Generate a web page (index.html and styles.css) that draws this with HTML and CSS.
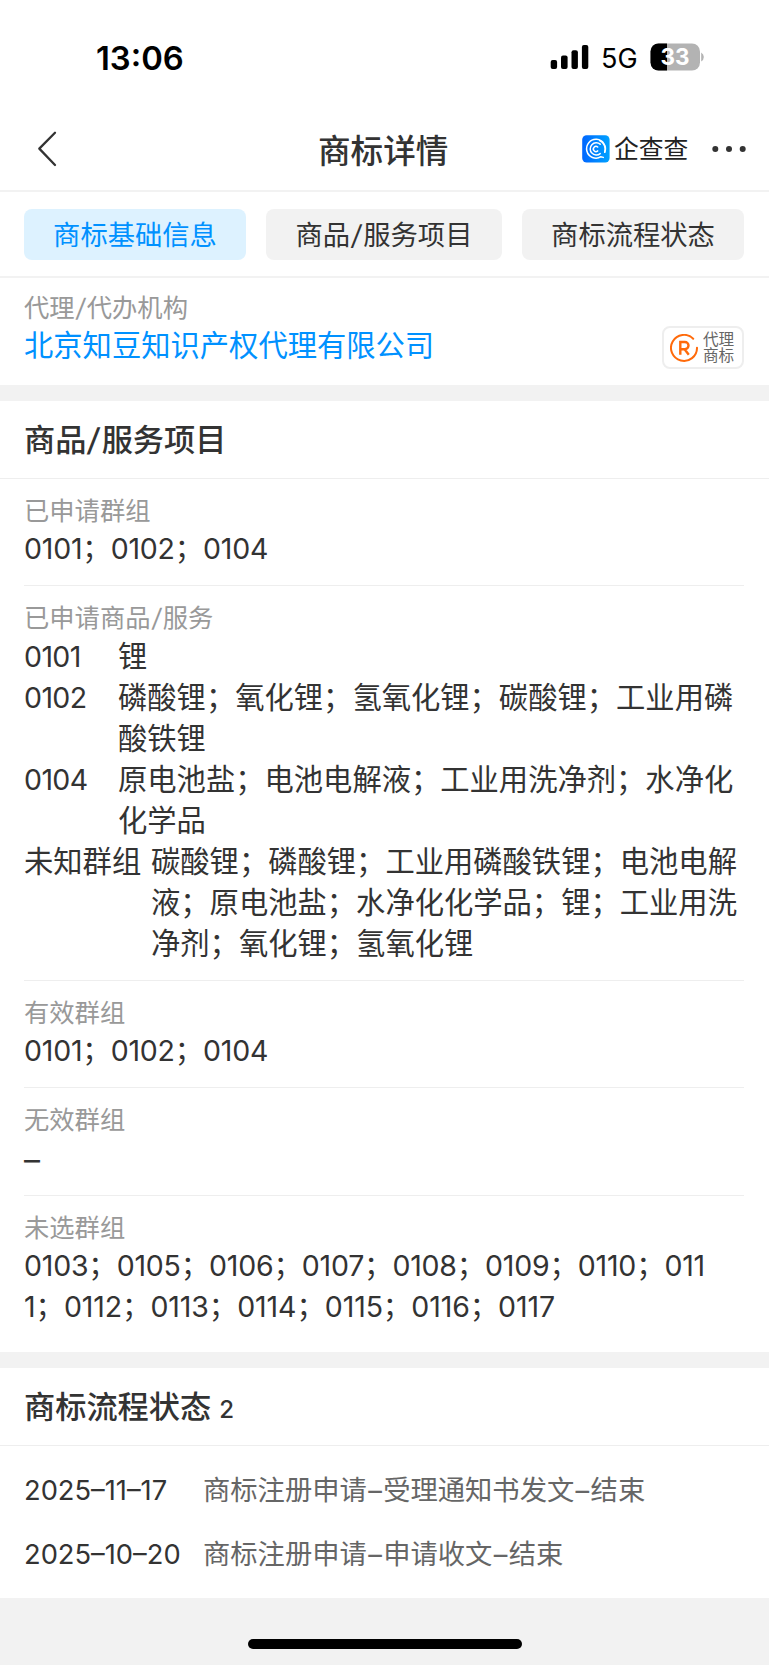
FILE: index.html
```html
<!DOCTYPE html>
<html lang="zh-CN">
<head>
<meta charset="utf-8">
<title>商标详情</title>
<link rel="stylesheet" href="styles.css">
</head>
<body>
<header class="top">
  <div class="status">
    <span class="time">13:06</span>
    <div class="status-right">
      <svg class="signal" width="39" height="26" viewBox="0 0 39 26"><rect x="0.7" y="16" width="6.4" height="9" rx="2"/><rect x="11" y="11.5" width="6.6" height="13.5" rx="2"/><rect x="21.5" y="6.3" width="6.4" height="18.7" rx="2"/><rect x="31.9" y="1" width="6.4" height="24" rx="2"/></svg>
      <span class="net">5G</span>
      <div class="battery">
        <svg width="54" height="28" viewBox="0 0 54 28"><defs><clipPath id="bat"><rect x="0.5" y="0.5" width="49.5" height="27" rx="8"/></clipPath></defs><g clip-path="url(#bat)"><rect width="50" height="28" fill="#b3b3b3"/><rect width="17" height="28" fill="#000"/></g><path d="M51.2 9.5Q53.8 11 53.8 14T51.2 18.5Z" fill="#b3b3b3"/></svg>
        <span class="level">33</span>
      </div>
    </div>
  </div>
  <div class="nav">
    <svg class="back" width="20" height="36" viewBox="0 0 20 36"><path d="M18 1.8 2.3 17.6 18 34" fill="none" stroke="#333" stroke-width="2.3" stroke-linecap="round" stroke-linejoin="round"/></svg>
    <h1 class="title">商标详情</h1>
    <div class="brand">
      <svg width="28" height="28" viewBox="0 0 28 28" fill="none"><defs><linearGradient id="lg"><stop offset="0" stop-color="#0066ff"/><stop offset="1" stop-color="#00a2ff"/></linearGradient></defs><rect x="0.2" y="0.2" width="27.4" height="27.4" rx="4.5" fill="url(#lg)"/><g stroke="#fff" stroke-width="1.5" stroke-linecap="round"><path d="M22.7 17.3A9.4 9.4 0 1 0 19 21.7L21.3 22.4"/><path d="M22.7 17.3A9.4 9.4 0 0 0 17.6 5.6"/><path d="M18.2 9.2A6.1 6.1 0 1 0 18.2 18.6"/><path d="M15.7 12A2.6 2.6 0 1 0 15.7 15.9"/></g></svg>
      <span class="brand-name">企查查</span>
    </div>
    <svg class="more" width="36" height="8" viewBox="0 0 36 8" fill="#333"><circle cx="3.3" cy="4" r="3"/><circle cx="17" cy="4" r="3"/><circle cx="30.7" cy="4" r="3"/></svg>
  </div>
</header>
<nav class="tabs">
  <span class="tab tab-on">商标基础信息</span>
  <span class="tab tab-mid">商品<i class="slash">/</i>服务项目</span>
  <span class="tab">商标流程状态</span>
</nav>
<section class="agent">
  <div>
    <div class="label">代理<i class="slash">/</i>代办机构</div>
    <div class="value link">北京知豆知识产权代理有限公司</div>
  </div>
  <div class="badge">
    <svg width="28" height="28" viewBox="0 0 28 28" fill="none" stroke="#ff6a0a"><path d="M23.2 4.7A13 13 0 1 0 27 13.7" stroke-width="2" stroke-linecap="round"/><path d="M10.3 20.7V8H14.9A3.6 3.6 0 0 1 14.9 15.2H10.3M14.6 15.2 18.8 20.7" stroke-width="2.4"/></svg>
    <span class="badge-text">代理<br>商标</span>
  </div>
</section>
<section class="panel">
  <h2 class="heading">商品<i class="slash">/</i>服务项目</h2>
  <div class="rows">
    <div class="row"><div class="label">已申请群组</div><div class="value num">0101；0102；0104</div></div>
    <div class="row services">
      <div class="label">已申请商品<i class="slash">/</i>服务</div>
      <div class="value group"><span class="code num">0101</span><span>锂</span></div>
      <div class="value group"><span class="code num">0102</span><span>磷酸锂；氧化锂；氢氧化锂；碳酸锂；工业用磷<br>酸铁锂</span></div>
      <div class="value group"><span class="code num">0104</span><span>原电池盐；电池电解液；工业用洗净剂；水净化<br>化学品</span></div>
      <div class="value group"><span class="code code-wide">未知群组</span><span>碳酸锂；磷酸锂；工业用磷酸铁锂；电池电解<br>液；原电池盐；水净化化学品；锂；工业用洗<br>净剂；氧化锂；氢氧化锂</span></div>
    </div>
    <div class="row"><div class="label">有效群组</div><div class="value num">0101；0102；0104</div></div>
    <div class="row"><div class="label">无效群组</div><div class="value none">–</div></div>
    <div class="row last"><div class="label">未选群组</div><div class="value num">0103；0105；0106；0107；0108；0109；0110；011<br><span class="second">1；0112；0113；0114；0115；0116；0117</span></div></div>
  </div>
</section>
<section class="panel flow">
  <h2 class="heading">商标流程状态<span class="count">2</span></h2>
  <div class="events">
    <div class="event"><span class="date">2025–11–17</span><span class="what">商标注册申请<i class="dash">–</i>受理通知书发文<i class="dash">–</i>结束</span></div>
    <div class="event"><span class="date">2025–10–20</span><span class="what">商标注册申请<i class="dash">–</i>申请收文<i class="dash">–</i>结束</span></div>
  </div>
</section>
<footer class="bottom"><div class="home"></div></footer>
</body>
</html>
```
FILE: styles.css
```css
* { box-sizing: border-box; }
body {
  margin: 0;
  width: 769px;
  height: 1665px;
  display: flex;
  flex-direction: column;
  overflow: hidden;
  background: #fff;
  color: #333;
  font-family: Inter, "Noto Sans CJK SC", sans-serif;
  white-space: nowrap;
}
h1, h2 { margin: 0; font-weight: 500; }
.top { height: 192px; border-bottom: 2px solid #f2f2f2; }
.status {
  height: 108px;
  padding: 6px 65px 0 96px;
  display: flex;
  align-items: center;
  justify-content: space-between;
  color: #000;
}
.time { font-size: 32.8px; font-weight: 600; line-height: 40px; padding-top: 1px; }
.status-right { display: flex; align-items: center; }
.net { font-size: 27px; line-height: 34px; width: 36px; margin: 4px 13px 0 12px; }
.battery { position: relative; width: 54px; height: 28px; }
.battery svg { display: block; }
.level {
  position: absolute;
  left: 0;
  top: 0;
  width: 50px;
  text-align: center;
  font-size: 22.5px;
  font-weight: 700;
  line-height: 28px;
  color: #fff;
}
.nav {
  height: 82px;
  display: grid;
  grid-template-columns: 281px 1fr 130px 57px;
  align-items: center;
}
.back { margin-left: 37px; }
.title { font-size: 32.6px; line-height: 48px; padding: 3px 0 0 37px; }
.brand { display: flex; align-items: center; gap: 4px; }
.brand-name { font-size: 24.8px; line-height: 30px; color: #222; }
.tabs {
  height: 86px;
  padding: 17px 24px;
  border-bottom: 2px solid #f2f2f2;
  display: flex;
  gap: 20px;
}
.tab {
  width: 222px;
  height: 51px;
  border-radius: 8px;
  background: #f2f2f2;
  font-size: 27.3px;
  line-height: 53px;
  text-align: center;
}
.tab-mid { width: 236px; }
.tab-on { background: #ddf2ff; color: #0091ff; }
.slash { display: inline-block; font-style: normal; line-height: 1; padding: 0 0.06em; transform: skewX(-7deg); }
.dash { font-style: normal; padding: 0 0.05em; }
.agent {
  height: 107px;
  padding: 13px 25px 0 24px;
  display: flex;
  justify-content: space-between;
}
.label { font-size: 25.3px; line-height: 34px; color: #999; }
.value { font-size: 29.3px; line-height: 41px; }
.num { font-size: 28.5px; letter-spacing: -0.2px; }
.code.num { letter-spacing: -0.6px; }
.second { letter-spacing: -0.1px; }
.none { font-size: 32px; line-height: 45px; }
.link { color: #0091ff; }
.badge {
  width: 82px;
  height: 43px;
  margin-top: 35px;
  padding-left: 6px;
  border: 2px solid #eee;
  border-radius: 8px;
  display: flex;
  align-items: center;
  gap: 5px;
}
.badge-text { font-size: 15.6px; line-height: 16px; color: #666; }
.panel { border-top: 16px solid #f2f2f2; }
.heading {
  height: 78px;
  padding: 0 24px;
  border-bottom: 1px solid #eee;
  font-size: 31.2px;
  line-height: 78px;
}
.rows { padding: 0 25px 0 24px; }
.row { height: 107.4px; padding-top: 15px; border-bottom: 1px solid #eee; }
.row.services { height: 394.6px; }
.services .label { margin-bottom: 1px; }
.row.last { height: 156px; border-bottom: 0; }
.group { display: flex; }
.code { width: 94px; }
.code-wide { width: 127px; }
.count { font-size: 24px; margin-left: 8px; }
.flow { height: 246px; }
.events { padding: 12px 24px; }
.event { height: 64.5px; display: flex; line-height: 65px; font-size: 27.3px; }
.date { width: 179px; }
.what { color: #666; }
.bottom { flex: 1; background: #f2f2f2; padding-top: 41px; }
.home { width: 274px; height: 10px; margin: 0 auto; border-radius: 5px; background: #000; }
```
